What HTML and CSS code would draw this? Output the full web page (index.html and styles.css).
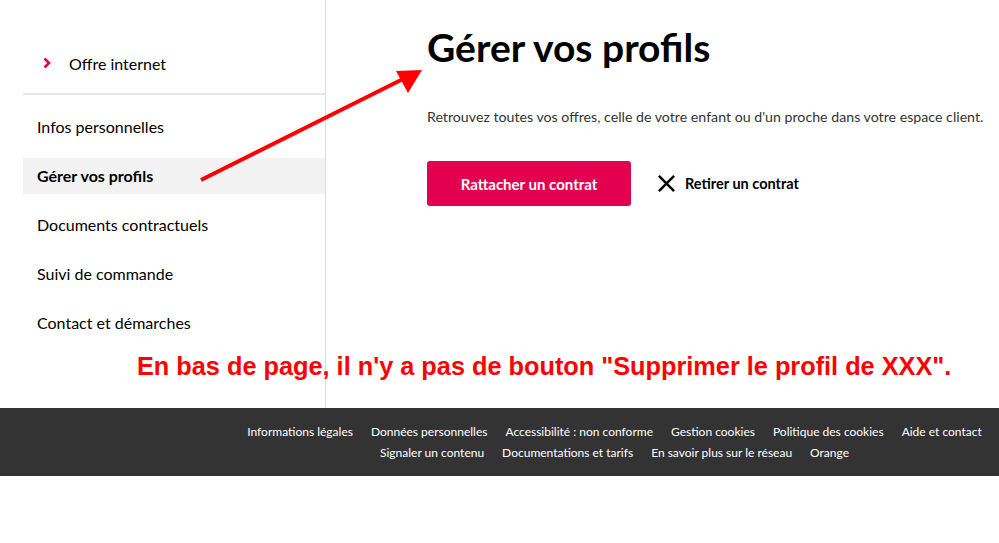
FILE: index.html
```html
<!DOCTYPE html>
<html lang="fr">
<head>
  <meta charset="UTF-8">
  <title>Gérer vos profils</title>
  <meta name="viewport" content="width=device-width, initial-scale=1">
  <link rel="stylesheet" href="styles.css">
</head>
<body>
<div class="page">
  <aside class="side">
    <div class="offer">
      <svg class="chev" width="8" height="12" viewBox="0 0 8 12"><path d="M1.5 1.5L6 6L1.5 10.5" fill="none" stroke="#e3004f" stroke-width="2.6"/></svg>
      Offre internet
    </div>
    <nav class="menu">
      <a href="#">Infos personnelles</a>
      <a href="#" class="active">Gérer vos profils</a>
      <a href="#">Documents contractuels</a>
      <a href="#">Suivi de commande</a>
      <a href="#">Contact et démarches</a>
    </nav>
  </aside>
  <main class="main">
    <h1>Gérer vos profils</h1>
    <p class="intro">Retrouvez toutes vos offres, celle de votre enfant ou d'un proche dans votre espace client.</p>
    <div class="actions">
      <button class="btn">Rattacher un contrat</button>
      <a href="#" class="remove">
        <svg width="19" height="19" viewBox="0 0 20 20"><path d="M2 2L18 18M18 2L2 18" stroke="#000" stroke-width="2.6"/></svg>
        Retirer un contrat
      </a>
    </div>
  </main>

  <svg class="arrow" width="999" height="200" viewBox="0 0 999 200">
    <line x1="201" y1="180" x2="405" y2="78" stroke="#f00" stroke-width="4"/>
    <polygon points="422,70 396,71 408,93" fill="#f00"/>
  </svg>
  <p class="note">En bas de page, il n'y a pas de bouton "Supprimer le profil de XXX".</p>
</div>

<footer class="foot">
  <div class="links">
    <a href="#">Informations légales</a>
    <a href="#">Données personnelles</a>
    <a href="#">Accessibilité : non conforme</a>
    <a href="#">Gestion cookies</a>
    <a href="#">Politique des cookies</a>
    <a href="#">Aide et contact</a>
    <a href="#">Signaler un contenu</a>
    <a href="#">Documentations et tarifs</a>
    <a href="#">En savoir plus sur le réseau</a>
    <a href="#">Orange</a>
  </div>
</footer>
</body>
</html>
```

FILE: styles.css
```css
body { margin: 0; font-family: Lato, "Open Sans", sans-serif; color: #000; background: #fff; }
a { color: inherit; text-decoration: none; }

.page { position: relative; display: flex; height: 408px; }

.side { width: 302px; padding-left: 23px; border-right: 1px solid #ddd; }
.offer { height: 95px; border-bottom: 2px solid #e6e6e6; display: flex; align-items: center; padding: 33px 0 0 19px; font-size: 16px; box-sizing: border-box; }
.chev { margin-right: 18px; margin-left: 1px; }
.menu { display: flex; flex-direction: column; padding-top: 14px; }
.menu a { height: 36px; line-height: 36px; padding-left: 14px; margin-bottom: 13px; font-size: 16px; }
.menu a.active { background: #f2f2f2; font-weight: 700; }

.main { flex: 1; padding-left: 101px; }
.main h1 { margin: 25px 0 0; font-size: 39px; font-weight: 700; line-height: 44px; }
.intro { margin: 39px 0 0; font-size: 14.2px; color: #333; }
.actions { display: flex; align-items: center; margin-top: 36px; }
.btn { width: 204px; height: 45px; background: #e3004f; color: #fff; border: 0; border-radius: 3px; font: 700 15px Lato, sans-serif; }
.remove { display: flex; align-items: center; gap: 9px; margin-left: 26px; font-weight: 700; font-size: 14.5px; }

.arrow { position: absolute; left: 0; top: 0; }
.note { position: absolute; left: 137px; top: 352px; margin: 0; color: #f00; font: 700 25.3px "Liberation Sans", Arial, sans-serif; }

.foot { background: #333; height: 68px; padding-left: 230px; box-sizing: border-box; display: flex; align-items: center; }
.links { display: flex; flex-wrap: wrap; justify-content: center; gap: 6px 18px; font-size: 12px; color: #fff; }
```
